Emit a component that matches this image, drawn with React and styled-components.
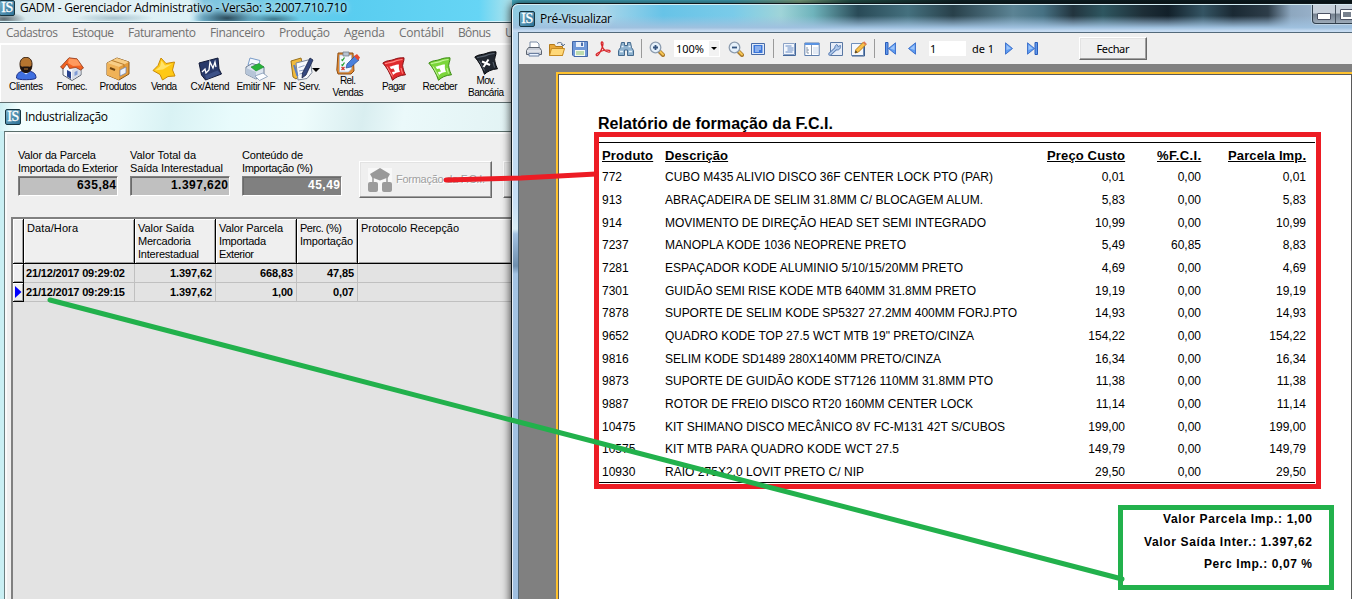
import React, { useLayoutEffect, useRef } from 'react';
import styled, { createGlobalStyle, css } from 'styled-components';

const GlobalStyle = createGlobalStyle`
  * { box-sizing: border-box; }
  body { margin: 0; overflow: hidden; }
`;

const segoe = '"Open Sans", "Noto Sans", sans-serif';
const arial = '"Liberation Sans", Arial, sans-serif';
const tahoma = '"Noto Sans", "Open Sans", sans-serif';

/* ---------- text that keeps the pitch of the original bitmap fonts ---------- */
const Pitch = styled.span`
  display: inline-block;
  white-space: pre;
  flex: none;
`;

function Fit({ w, children }) {
  const ref = useRef(null);
  useLayoutEffect(() => {
    const el = ref.current;
    el.style.letterSpacing = '0px';
    const natural = el.getBoundingClientRect().width;
    const gap = (w - natural) / Math.max(1, el.textContent.length - 1);
    el.style.letterSpacing = `${gap}px`;
    el.style.marginRight = `${-gap}px`;
  }, [w, children]);
  return <Pitch ref={ref}>{children}</Pitch>;
}

/* ---------- desktop ---------- */
const Desktop = styled.main`
  position: relative;
  width: 1352px;
  height: 599px;
  overflow: hidden;
  background: linear-gradient(90deg, #4bb9cf 0, #49b4cc 730px, #8db992 800px, #2a5d55 850px, #10262b 960px, #0d1c22 1352px);
  color: #000;
`;

const MainWindow = styled.section`
  width: 512px;
  height: 599px;
  display: flex;
  flex-direction: column;
  background: #efefef;
  overflow: hidden;
`;

const MainTitle = styled.header`
  height: 23px;
  flex: none;
  display: flex;
  align-items: flex-start;
  gap: 5px;
  margin-left: -1px;
  font: 12px/16px ${segoe};
  border-bottom: 1px solid #3c5560;
  box-shadow: inset 0 -1px #d9f3fa;
  background:
    radial-gradient(ellipse 34px 10px at 228px 18px, #2b4a5a 0, #3c6c8480 60%, transparent),
    radial-gradient(ellipse 22px 7px at 5px 19px, #5d6a70 0, transparent),
    radial-gradient(ellipse 40px 5px at 115px 18px, #a9c4cf 0, transparent),
    radial-gradient(ellipse 26px 6px at 275px 19px, #3e788c 0, transparent),
    linear-gradient(90deg, #cfe4ea 0, #e3f0f3 60px, #dcf2f7 190px, #80c4de 205px, #78cbe4 250px, #59cdf0 350px, #66d5f5 480px, #aee3ec 512px);
  span { text-shadow: 0 0 5px #ffffffc0, 0 0 8px #ffffff90; }
`;

const MenuBar = styled.nav`
  height: 20px;
  flex: none;
  display: flex;
  gap: 14px;
  padding-left: 6px;
  font: 12px/20px ${segoe};
  color: #707070;
  background: #f0f0f0;
`;

const ToolBar = styled.div`
  height: 59px;
  flex: none;
  display: flex;
  align-items: center;
  padding: 2px 0 0 3px;
  border-top: 2px solid #fff;
  background: #efefef;
  box-shadow: inset 1px 0 #fff;
`;

const ToolButton = styled.div`
  position: relative;
  width: 46px;
  flex: none;
  display: flex;
  flex-direction: column;
  align-items: center;
  font: 10px/12px ${arial};
  svg { display: block; }
`;

const DropArrow = styled.i`
  position: absolute;
  left: 33px;
  top: 11px;
  border: 4px solid transparent;
  border-top-color: #000;
  border-bottom: 0;
`;

const ChildTitle = styled.header`
  height: 29px;
  flex: none;
  display: flex;
  align-items: center;
  gap: 4px;
  padding-left: 5px;
  border-top: 1px solid #5f6e70;
  font: 12px/16px ${segoe};
  background: linear-gradient(100deg, #cbeef2 0, #f4ffff 20px, #eafbfc 120px, #d9f2f4 170px, #e8fbfc 230px, #eefcfc 300px, #d9eef0 360px, #ebf9fa 400px, #e2f3f4 512px);
`;

const ChildFrame = styled.div`
  flex: 1;
  display: flex;
  padding-left: 4px;
  background: #c9eff3;
`;

const ChildBody = styled.div`
  flex: 1;
  min-width: 0;
  display: flex;
  flex-direction: column;
  border-left: 1px solid #6b7f80;
  border-top: 1px solid #5a6e6b;
  box-shadow: inset 2px 2px #fafafa;
  background: #efefef;
  font: 11px/13px ${arial};
`;

const Filters = styled.div`
  display: flex;
  height: 85px;
  flex: none;
  padding: 17px 0 0 13px;
`;

const Field = styled.label`
  width: 112px;
  flex: none;
  display: flex;
  flex-direction: column;
`;

const Line = styled.div`
  display: flex;
`;

const Value = styled.output`
  width: 100px;
  height: 20px;
  margin-top: 1px;
  padding-right: 1px;
  font: bold 12px/17px ${arial};
  border: 1px solid;
  border-color: #808080 #fff #fff #808080;
  box-shadow: inset 1px 1px #6a6a6a;
  display: flex;
  justify-content: flex-end;
  color: ${(p) => (p.$dark ? '#fff' : '#000')};
  background: ${(p) => (p.$dark ? '#808080' : '#c0c0c0')};
`;

const raised = css`
  border: 1px solid;
  border-color: #fff #696969 #696969 #fff;
  box-shadow: inset -1px -1px #a0a0a0, inset 1px 1px #e3e3e3;
  background: #efefef;
`;

const FciButton = styled.button`
  ${raised};
  width: 133px;
  height: 37px;
  margin: 12px 0 0 5px;
  padding: 0 0 0 8px;
  flex: none;
  display: flex;
  align-items: center;
  gap: 4px;
  color: #a0a0a0;
  font: 11px/13px ${arial};
  text-shadow: 1px 1px #fff;
`;

const NextButton = styled(FciButton)`
  width: 40px;
  margin-left: 11px;
`;

const Grid = styled.div`
  flex: 1;
  margin-left: 6px;
  border-left: 2px solid #808080;
  border-top: 2px solid #808080;
  background: #e3e3e3;
`;

const GridRow = styled.div`
  display: grid;
  grid-template-columns: 11px 111px 81px 81px 61px 1fr;
  height: ${(p) => (p.$head ? 45 : 19)}px;
`;

const HeadCell = styled.div`
  padding: 3px 0 0 3px;
  background: #efefef;
  border-right: 1px solid #000;
  border-bottom: 1px solid #000;
  box-shadow: inset 1px 1px #fff, inset -1px -1px #a0a0a0;
`;

const Cell = styled.div`
  display: flex;
  justify-content: ${(p) => (p.$left ? 'flex-start' : 'flex-end')};
  padding: 0 3px 0 2px;
  font: bold 11px/18px ${arial};
  border-right: 1px solid #c0c0c0;
  border-bottom: 1px solid #c0c0c0;
`;

const Marker = styled(HeadCell)`
  padding: 3px 0 0 2px;
  svg { display: block; }
`;

/* ---------- preview window ---------- */
const Preview = styled.section`
  position: absolute;
  left: 511px;
  top: 3px;
  width: 850px;
  height: 610px;
  display: flex;
  flex-direction: column;
  padding-left: 6px;
  border: 1px solid #10181c;
  border-radius: 7px 0 0 0;
  background: linear-gradient(180deg, #b9d8ee 0, #c3dcf3 170px, #c9e0f6 200px, #d9edf5 225px, #a3c2e2 230px, #6f8fae 262px, #a4c4e4 270px, #9fbfe0 100%);
  box-shadow: 0 0 9px 1px #000000b0, inset 1px 1px #ffffffc0;
`;

const PreviewTitle = styled.header`
  height: 28px;
  flex: none;
  display: flex;
  align-items: center;
  gap: 5px;
  margin-left: -5px;
  padding-left: 6px;
  border-radius: 6px 0 0 0;
  border-top: 1px solid #d3edf4;
  font: 12px/18px ${segoe};
  background:
    linear-gradient(180deg, transparent 40%, #9fc1df 84%, #c7dcf2 96%),
    linear-gradient(90deg, #8fcae0 0, #a9d6ea 90px, #67c3e7 150px, #7acbe9 220px, #9fd4d8 268px, #6fb4bc 300px, #294a57 345px, #44707e 395px, #28404a 440px, #5b8394 500px, #467183 530px, #22343e 560px, #2e5660 590px, #1d2e37 630px, #12202a 655px, #345463 690px, #1a2933 720px, #2d3d49 755px, #8da7bf 778px, #a9c0da 838px);
  span { text-shadow: 0 0 6px #ffffffc0; }
`;

const Caption = styled.div`
  align-self: flex-start;
  margin: 0 0 0 auto;
  display: flex;
  height: 19px;
  width: 48px;
  border: 1px solid #303f4c;
  border-top: 0;
  border-radius: 0 0 0 4px;
  background: linear-gradient(#c7d0db 45%, #74808e 50%, #9dabb9);
  box-shadow: 0 0 0 1px #d7e4ee90;
`;

const CaptionButton = styled.div`
  width: 28px;
  display: flex;
  align-items: center;
  justify-content: center;
  border-right: 1px solid #45515d;
  &::after {
    content: '';
    width: 12px;
    height: ${(p) => (p.$max ? 9 : 5)}px;
    margin-top: ${(p) => (p.$max ? 0 : 4)}px;
    border: ${(p) => (p.$max ? '1px' : '1px')} solid #4c5264;
    border-radius: 1px;
    background: ${(p) => (p.$max ? '#77808d' : '#fff')};
    box-shadow: ${(p) => (p.$max ? 'inset 0 0 0 2px #fff' : 'none')};
  }
`;

const PreviewBody = styled.div`
  flex: 1;
  display: flex;
  flex-direction: column;
  border-left: 1px solid #53697a;
  border-top: 1px solid #53697a;
  background: #808080;
`;

const PreviewTools = styled.div`
  height: 31px;
  flex: none;
  display: flex;
  align-items: center;
  padding-left: 3px;
  background: #efefef;
  font: 11px/16px ${tahoma};
`;

const Slot = styled.div`
  width: ${(p) => p.$w}px;
  margin-left: ${(p) => p.$ml || 0}px;
  flex: none;
  display: flex;
  justify-content: center;
  svg { display: block; }
`;

const Sep = styled.i`
  width: 1px;
  height: 19px;
  margin-left: ${(p) => p.$ml}px;
  background: #9a9a9a;
`;

const Zoom = styled.div`
  display: flex;
  align-items: center;
  justify-content: space-between;
  width: 46px;
  height: 17px;
  margin-left: 5px;
  padding-left: 2px;
  background: #fff;
`;

const ZoomArrow = styled.i`
  width: 12px;
  height: 17px;
  display: flex;
  align-items: center;
  justify-content: center;
  border: 1px solid #fff;
  background: #f2f2f2;
  &::after {
    content: '';
    border: 3px solid transparent;
    border-top-color: #000;
    border-bottom: 0;
  }
`;

const PageInput = styled.div`
  width: 37px;
  height: 15px;
  margin: 0 6px 0 8px;
  padding-left: 1px;
  line-height: 15px;
  background: #fff;
`;

const CloseButton = styled.button`
  ${raised};
  width: 68px;
  height: 23px;
  margin-left: 37px;
  padding: 0;
  font: 11px/16px ${tahoma};
  color: #000;
`;

const Canvas = styled.div`
  flex: 1;
  display: flex;
  padding: 8px 0 0 37px;
`;

const Paper = styled.article`
  width: 796px;
  flex: none;
  padding: 39px 0 0 39px;
  border: solid #ffc22e;
  border-width: 2px 0 0 2px;
  box-shadow: inset 1px 1px #5a5a5a, inset -1px 0 #5a5a5a;
  background: #fff;
  font: 12px/16px ${arial};
`;

const ReportTitle = styled.h1`
  margin: 0;
  padding: 0 0 0 1px;
  height: 29px;
  font: bold 16px/22px ${arial};
`;

const Report = styled.div`
  width: 718px;
  height: 341px;
  border: solid #000;
  border-width: 1px 0;
`;

const ReportRow = styled.div`
  display: grid;
  grid-template-columns: 63px 350px 110px 76px 105px;
  padding-left: 5px;
  align-items: center;
  height: ${(p) => (p.$head ? 23 : 22.67)}px;
  ${(p) => p.$head && css`
    padding-top: 3px;
    font: bold 13px/16px ${arial};
    & > div > span { text-decoration: underline; }
  `}
`;

const Col = styled.div`
  display: flex;
  justify-content: ${(p) => (p.$num ? 'flex-end' : 'flex-start')};
`;

const Summary = styled.footer`
  width: 715px;
  padding-top: 25px;
  display: flex;
  flex-direction: column;
  align-items: flex-end;
  font: bold 12px/22.5px ${arial};
`;

const Markup = styled.svg`
  position: absolute;
  left: 0;
  top: 0;
  pointer-events: none;
`;

/* ---------- icons ---------- */
const LogoBox = styled.i`
  width: 16px;
  height: 16px;
  flex: none;
  display: flex;
  align-items: center;
  justify-content: center;
  border: 1px solid #16343f;
  border-radius: 2px;
  background: linear-gradient(135deg, #78aec8, #2d7297);
  color: #fff;
  font: 14px/14px "Liberation Serif", serif;
  letter-spacing: -0.5px;
  -webkit-text-stroke: 0.3px #fff;
`;
const Logo = () => <LogoBox>IS</LogoBox>;

const Svg = ({ s = 24, children }) => (
  <svg width={s} height={s} viewBox={`0 0 ${s} ${s}`} fill="none">{children}</svg>
);

const icons = {
  client: (
    <Svg>
      <path d="M2.500 21c0-5 3-7 9.500-7s10 2 10 7c0 2-19.500 2.500-19.500 0z" fill="#3f6fe0" stroke="#1c2f86" />
      <path d="M8 14.500l4 3 4-3" fill="#cfe0ff" />
      <path d="M6 7c0-9 12-9 12 0 0 5-2 8.500-6 8.500S6 12 6 7z" fill="#b5742f" stroke="#3b2413" />
      <path d="M6 8c1 1.500 2 2 3.500 1.500h5C16 10 17 9.500 18 8c0 4-2 8-6 8s-6-4-6-8z" fill="#1d1310" />
      <path d="M10 12h4" stroke="#b5742f" />
    </Svg>
  ),
  house: (
    <Svg>
      <path d="M3 9v9l9 5.500 9-5.500V9l-7-6z" fill="#f6f8fc" stroke="#59606c" />
      <path d="M12 13v10l8.500-5.500V9z" fill="#d5dce8" />
      <path d="M.5 10L9 .8l8 1 6.500 9.200-3 2-4.500-2.500-6.500 1L7 7l-4 5z" fill="#f26322" stroke="#8d3a1d" strokeWidth=".8" />
      <path d="M9 1.500l8 1 4 6-8 .5-5-3z" fill="#ff9a5e" />
      <path d="M7 13l4 2v7l-4-2.500z" fill="#28438f" />
      <path d="M14.500 15l3-1.500v4l-3 1.500z" fill="#7f9bd6" />
    </Svg>
  ),
  box: (
    <Svg>
      <path d="M1 6l10-5 12 4v12l-10 6-12-5z" fill="#e39c3c" stroke="#8a5a1c" />
      <path d="M1 6l12 4v13L1 18z" fill="#f0b257" />
      <path d="M1 6l10-5 12 4-10 5z" fill="#f7cd86" />
      <path d="M6 3.500l12 4v3" stroke="#b67b2c" />
      <path d="M14 13l6-3v6l-6 3z" fill="#eef3fb" stroke="#6a83b0" strokeWidth=".7" />
      <path d="M4 11l5 2" stroke="#70450f" strokeWidth="2" />
    </Svg>
  ),
  star: (
    <Svg>
      <path d="M9 1l5 5.500 8.500-1.500-2 8 2.500 6-7 .5L10.500 23 8 17.500l-7-4 5-5z" fill="#ffc915" stroke="#c98a08" />
      <path d="M9.500 3.500l3.500 5 7-1.500-9 5.500-8 1 5-4z" fill="#ffe36a" />
    </Svg>
  ),
  chart: (
    <Svg>
      <path d="M1 6l19-5 1 11 2.500 5-16 6-4-5z" fill="#28396a" stroke="#121a38" />
      <path d="M7 18.500l12.500-5 3 3-14 6z" fill="#3c5187" />
      <path d="M4 15l3-3 1 4 3-3 1-8 3 6 2-6 1 5" stroke="#fff" strokeWidth="1.300" />
    </Svg>
  ),
  printer: (
    <Svg>
      <path d="M6 1l10 2.500-2 7L4 8z" fill="#f4f9ff" stroke="#7a9cc8" />
      <path d="M2 10l6-3.500 12 3.500v8l-8 4-10-5z" fill="#dbe4ef" stroke="#6b7c95" />
      <path d="M2 11l10 4v7L2 17z" fill="#b6c5d8" />
      <path d="M7 10l8-3.500 5 3.500-8 4z" fill="#27b43a" stroke="#178429" strokeWidth=".6" />
      <path d="M11 19l8-3 4.500 3.500-8 4z" fill="#fbfdff" stroke="#8198b5" strokeWidth=".8" />
    </Svg>
  ),
  notes: (
    <Svg>
      <path d="M1 4l10-3 3 14-8 7-3-2z" fill="#f1bb3d" stroke="#98701d" />
      <path d="M6 6l14-3.500 2 13-5 6-9 1.500z" fill="#f7f9fd" stroke="#7a8597" />
      <path d="M8.500 10.500l6-2M9 14l5-1M9.500 17l4-1" stroke="#8fa2c4" />
      <path d="M20 1l3 2-7 15-4 3 .5-5z" fill="#35497f" stroke="#1b2547" strokeWidth=".8" />
      <path d="M4 8l3.500 11" stroke="#5b7fc5" strokeWidth="2" />
    </Svg>
  ),
  report: (
    <Svg>
      <path d="M2 2h15l1 18-3 3H2L.8 19z" fill="#e18a33" stroke="#8c4e16" />
      <path d="M3.500 4h12v14l-3 3h-9z" fill="#f4f9ff" stroke="#9db4d4" strokeWidth=".7" />
      <path d="M7 1h6v4H7z" fill="#b8c3d0" stroke="#68727f" strokeWidth=".7" />
      <path d="M5.500 8.500l1 1 2-3M5.500 13.500l1 1 2-3" stroke="#2aa136" strokeWidth="1.300" />
      <path d="M5.500 16l3 3m0-3l-3 3" stroke="#d3362b" strokeWidth="1.200" />
      <path d="M11 13l8-8 4 4-8 7-5 1z" fill="#4a80dc" stroke="#274a93" strokeWidth=".7" />
      <path d="M18 5l3-2 3 3.500-2 3z" fill="#e6492f" />
    </Svg>
  ),
};

const Money = ({ main, dark, light, cross }) => (
  <Svg>
    <path d="M.8 6C5 3 8 4 12 2.500 15 1 18 .8 22 .8c.6 3-2.500 7-1 10 .6 3 1.500 5 2.500 7-6 .5-10 2.500-13 5.500C8 16 5 11 .8 6z" fill={main} stroke={dark} />
    <path d="M3 6.800c5-2 8-1 11-3 2-.8 4-1.200 6.500-1.300" stroke={light} strokeWidth="1.200" />
    <path d="M5 9.500l5.500 10M19 11l1.500 5.500" stroke={light} />
    {cross
      ? <path d="M8 10.500l8 3.500M14.500 8.500l-5 7.500" stroke="#fff" strokeWidth="2" />
      : <path d="M7.500 9.500c3 0 5-2 9.500-2-.5 3 0 5 1 7.500-2.500 0-5 1-7 3l-1-3 3-.5-1.500-3-2.500.5z" fill="#fff" />}
  </Svg>
);

const Lens = ({ minus }) => (
  <Svg s={16}>
    <path d="M10 10l4 4" stroke="#a8782a" strokeWidth="4" strokeLinecap="round" />
    <path d="M10.500 10l3.500 3.500" stroke="#f6c655" strokeWidth="2" strokeLinecap="round" />
    <circle cx="6.500" cy="6.500" r="5.300" fill="#e6f1fb" stroke="#8d9db0" strokeWidth="1.300" />
    <path d={minus ? 'M4 6.500h5' : 'M4 6.500h5M6.500 4v5'} stroke="#35557f" strokeWidth="1.800" />
  </Svg>
);

const small = {
  print: (
    <Svg s={16}>
      <path d="M4 7V1h7l2 2v4" fill="#fff" stroke="#7b8ca6" />
      <path d="M2.500 6.500h11l2 3v4H.5v-4z" fill="#c9ced8" stroke="#5c6470" />
      <path d="M1 10h14" stroke="#f5f7fa" />
      <path d="M3 12.500h10v2.500H3z" fill="#eaf3ff" stroke="#6b7fa0" />
    </Svg>
  ),
  open: (
    <Svg s={16}>
      <path d="M.5 3.500h5l1 2h7v9H.5z" fill="#e9a93b" stroke="#b37a1a" />
      <path d="M.5 14.500l2-7h13l-2 7z" fill="#ffd877" stroke="#c58a22" />
      <path d="M8 2.500c3-2.500 6 0 6 2m-2-1.500l2 2 2-2" stroke="#5e7390" />
    </Svg>
  ),
  save: (
    <Svg s={16}>
      <path d="M.5.5h15v15H2l-1.500-1.500z" fill="#6f98d8" stroke="#4267a8" />
      <path d="M4 1h8v5H4z" fill="#e9f0fa" />
      <path d="M9 1.500h2v3.500H9z" fill="#4c70ae" />
      <path d="M3 9h10v6H3z" fill="#f5faf2" />
      <path d="M4 11h8M4 13h8" stroke="#86bb6b" />
    </Svg>
  ),
  pdf: (
    <Svg s={16}>
      <path d="M7 1c-1.500 0-.5 4 1.500 7 2 2.500 6 4 6.500 2.500.5-2-6-1.500-9.500 0C2 12 .5 13.500 1.500 14.500 3 15.500 6 10 7 7s1.500-6 0-6z" stroke="#d9262b" strokeWidth="1.300" />
    </Svg>
  ),
  find: (
    <Svg s={16}>
      <path d="M3.500 1.500h3v3h3v-3h3l1 5 2 3v5h-6V9h-3v5.500H.5v-5l2-3z" fill="#8eb2cf" stroke="#43698d" />
      <path d="M2 10.500h3M11 10.500h3M3.500 5.500h2M10.500 5.500h2" stroke="#e6f2fb" strokeWidth="1.500" />
    </Svg>
  ),
  full: (
    <Svg s={16}>
      <path d="M1.500 2.500h13v11h-13z" fill="#dfe9f8" stroke="#476ba8" />
      <path d="M3.500 4h9v8h-9z" fill="#3a76da" />
      <path d="M5 6h6M5 8h6M5 10h4" stroke="#dbe8ff" />
    </Svg>
  ),
  outline: (
    <Svg s={16}>
      <path d="M2.500 2.500h11v11h-11z" fill="#f3f7fd" stroke="#8da3c6" />
      <path d="M14.500 2v12.500H2" stroke="#44689c" />
      <path d="M4.500 5h6M6.500 7h6M6.500 9h6M4.500 11h7" stroke="#5a7fbd" strokeWidth=".9" />
    </Svg>
  ),
  thumbs: (
    <Svg s={16}>
      <path d="M.8 2h14.400v12.500H.8z" fill="#fff" stroke="#5e7fae" />
      <path d="M1 3h14" stroke="#5a93e2" strokeWidth="2" />
      <path d="M7.500 4v10M3 6v6h2M3 9h2" stroke="#8a98ac" />
      <path d="M9 6h5v7H9z" fill="#e4ebf5" />
    </Svg>
  ),
  setup: (
    <Svg s={16}>
      <path d="M2.500 1.500h12v13h-12z" fill="#e7edf8" stroke="#5877a3" />
      <path d="M2 13l6-5.500" stroke="#5e82b8" strokeWidth="3.500" strokeLinecap="round" />
      <path d="M12.500 4.500l-2.500 1-1-2C6.500 4 6 8 8.500 8.800s4.500-1.500 4-4.300z" fill="#a9c4e8" stroke="#5e82b8" />
      <path d="M2 13l6.500-6" stroke="#b9d0ef" strokeWidth="1.500" strokeLinecap="round" />
    </Svg>
  ),
  edit: (
    <Svg s={16}>
      <path d="M.5 2.500h12v12H.5z" fill="#f5f8fd" stroke="#6f8fba" />
      <path d="M13.500 5v10H1" stroke="#3b5d8e" />
      <path d="M4 12l1-3.500L12.500 1 15 3.500 7.500 11z" fill="#f9c24a" stroke="#b57b1a" />
      <path d="M4 12l.7-2.500 1.800 1.800z" fill="#333" />
      <path d="M12.500 1L15 3.500" stroke="#e07b50" strokeWidth="2" />
    </Svg>
  ),
};

const Arrow = ({ bar, flip }) => (
  <svg width={bar ? 11 : 8} height="13" viewBox={bar ? '0 0 11 13' : '3 0 8 13'}>
    <g transform={flip ? `translate(${bar ? 11 : 14} 0) scale(-1 1)` : undefined}>
      {bar && <path d="M.5.5h2.500v12H.5z" fill="#5f97ea" stroke="#2a5dbb" />}
      <path d="M10.500.8v11.400L3.500 6.500z" fill="#5e9bf0" stroke="#2a61c4" strokeWidth=".8" />
      <path d="M9.500 3v5L5 6.500z" fill="#9cc5fa" />
    </g>
  </svg>
);

const Hierarchy = () => (
  <svg width="24" height="24" viewBox="0 0 24 24">
    <path d="M0 0h24v24H0z" fill="#f8f8f8" />
    <path d="M5 15V9h14v6" fill="none" stroke="#999" strokeWidth="1.500" />
    <path d="M12 0l10 6-2 3.500-8 3-8-3L2 6z" fill="#999" />
    <rect y="14" width="10" height="10" rx="2" fill="#9c9c9c" />
    <rect x="14" y="14" width="10" height="10" rx="2" fill="#9c9c9c" />
  </svg>
);

/* ---------- data ---------- */
const menu = [['Cadastros', 52], ['Estoque', 42], ['Faturamento', 68], ['Financeiro', 55], ['Produção', 51], ['Agenda', 41], ['Contábil', 45], ['Bônus', 33], ['Utilitários', 56]];

const tools = [
  [icons.client, ['Clientes', 34]],
  [icons.house, ['Fornec.', 31]],
  [icons.box, ['Produtos', 37]],
  [icons.star, ['Venda', 26]],
  [icons.chart, ['Cx/Atend', 39]],
  [icons.printer, ['Emitir NF', 39]],
  [icons.notes, ['NF Serv.', 37]],
  [icons.report, ['Rel.', 16], ['Vendas', 31]],
  [<Money main="#e0292c" dark="#8b1014" light="#ff8c86" />, ['Pagar', 24]],
  [<Money main="#7bd63a" dark="#3d8b16" light="#c6f59b" />, ['Receber', 35]],
  [<Money main="#20262f" dark="#06080c" light="#59636f" cross />, ['Mov.', 19], ['Bancária', 36]],
];

const fields = [
  { lines: [['Valor da Parcela', 78], ['Importada do Exterior', 100]], value: '635,84', w: 39 },
  { lines: [['Valor Total da', 66], ['Saída Interestadual', 93]], value: '1.397,620', w: 57 },
  { lines: [['Conteúdo de', 61], ['Importação (%)', 71]], value: '45,49', w: 32, dark: true },
];

const heads = [
  [['Data/Hora', 51]],
  [['Valor Saída', 56], ['Mercadoria', 53], ['Interestadual', 61]],
  [['Valor Parcela', 64], ['Importada', 47], ['Exterior', 35]],
  [['Perc. (%)', 42], ['Importação', 53]],
  [['Protocolo Recepção', 98]],
];

const history = [
  ['21/12/2017 09:29:02', '1.397,62', '668,83', '47,85'],
  ['21/12/2017 09:29:15', '1.397,62', '1,00', '0,07'],
];
const historyWidth = { 8: 42, 6: 33, 5: 27, 4: 21 };

const products = [
  ['772', 'CUBO M435 ALIVIO DISCO 36F CENTER LOCK PTO (PAR)', 328, '0,01', '0,00', '0,01'],
  ['913', 'ABRAÇADEIRA DE SELIM 31.8MM C/ BLOCAGEM ALUM.', 318, '5,83', '0,00', '5,83'],
  ['914', 'MOVIMENTO DE DIREÇÃO HEAD SET SEMI INTEGRADO', 321, '10,99', '0,00', '10,99'],
  ['7237', 'MANOPLA KODE 1036 NEOPRENE PRETO', 241, '5,49', '60,85', '8,83'],
  ['7281', 'ESPAÇADOR KODE ALUMINIO 5/10/15/20MM PRETO', 298, '4,69', '0,00', '4,69'],
  ['7301', 'GUIDÃO SEMI RISE KODE MTB 640MM 31.8MM PRETO', 311, '19,19', '0,00', '19,19'],
  ['7878', 'SUPORTE DE SELIM KODE SP5327 27.2MM 400MM FORJ.PTO', 352, '14,93', '0,00', '14,93'],
  ['9652', 'QUADRO KODE TOP 27.5 WCT MTB 19" PRETO/CINZA', 309, '154,22', '0,00', '154,22'],
  ['9816', 'SELIM KODE SD1489 280X140MM PRETO/CINZA', 276, '16,34', '0,00', '16,34'],
  ['9873', 'SUPORTE DE GUIDÃO KODE ST7126 110MM 31.8MM PTO', 328, '11,38', '0,00', '11,38'],
  ['9887', 'ROTOR DE FREIO DISCO RT20 160MM CENTER LOCK', 308, '11,14', '0,00', '11,14'],
  ['10475', 'KIT SHIMANO DISCO MECÂNICO 8V FC-M131 42T S/CUBOS', 340, '199,00', '0,00', '199,00'],
  ['10575', 'KIT MTB PARA QUADRO KODE WCT 27.5', 234, '149,79', '0,00', '149,79'],
  ['10930', 'RAIO 275X2.0 LOVIT PRETO C/ NIP', 199, '29,50', '0,00', '29,50'],
];

const Lines = ({ items }) => items.map(([t, w]) => <Line key={t}><Fit w={w}>{t}</Fit></Line>);

/* ---------- page ---------- */
export default function App() {
  return (
    <Desktop>
      <GlobalStyle />
      <MainWindow>
        <MainTitle><Logo /><Fit w={327}>GADM - Gerenciador Administrativo - Versão: 3.2007.710.710</Fit></MainTitle>
        <MenuBar>{menu.map(([t, w]) => <Fit key={t} w={w}>{t}</Fit>)}</MenuBar>
        <ToolBar>
          {tools.map(([icon, ...lines]) => (
            <ToolButton key={lines[0][0]}>
              {icon}
              {lines.map(([t, w]) => <Fit key={t} w={w}>{t}</Fit>)}
              {lines[0][0] === 'NF Serv.' && <DropArrow />}
            </ToolButton>
          ))}
        </ToolBar>
        <ChildTitle><Logo /><Fit w={83}>Industrialização</Fit></ChildTitle>
        <ChildFrame>
          <ChildBody>
            <Filters>
              {fields.map((f) => (
                <Field key={f.value}>
                  <Lines items={f.lines} />
                  <Value $dark={f.dark}><Fit w={f.w}>{f.value}</Fit></Value>
                </Field>
              ))}
              <FciButton><Hierarchy /><Fit w={89}>Formação da F.C.I.</Fit></FciButton>
              <NextButton />
            </Filters>
            <Grid>
              <GridRow $head>
                <HeadCell />
                {heads.map((h) => <HeadCell key={h[0][0]}><Lines items={h} /></HeadCell>)}
              </GridRow>
              {history.map(([date, ...nums], i) => (
                <GridRow key={date}>
                  <Marker>
                    {i === 1 && <svg width="7" height="12" viewBox="0 0 7 12"><path d="M0 0l6.500 6L0 12z" fill="#00f" /></svg>}
                  </Marker>
                  <Cell $left><Fit w={99}>{date}</Fit></Cell>
                  {nums.map((n) => <Cell key={n}><Fit w={historyWidth[n.length]}>{n}</Fit></Cell>)}
                  <Cell />
                </GridRow>
              ))}
            </Grid>
          </ChildBody>
        </ChildFrame>
      </MainWindow>

      <Preview>
        <PreviewTitle>
          <Logo /><Fit w={72}>Pré-Visualizar</Fit>
          <Caption><CaptionButton /><CaptionButton $max /></Caption>
        </PreviewTitle>
        <PreviewBody>
          <PreviewTools>
            <Slot $w={24}>{small.print}</Slot>
            <Slot $w={22}>{small.open}</Slot>
            <Slot $w={24}>{small.save}</Slot>
            <Slot $w={22}>{small.pdf}</Slot>
            <Slot $w={24}>{small.find}</Slot>
            <Sep $ml={3} />
            <Slot $w={25} $ml={2}><Lens /></Slot>
            <Zoom><Fit w={28}>100%</Fit><ZoomArrow /></Zoom>
            <Slot $w={24} $ml={4}><Lens minus /></Slot>
            <Slot $w={20}>{small.full}</Slot>
            <Sep $ml={5} />
            <Slot $w={20} $ml={5}>{small.outline}</Slot>
            <Slot $w={20} $ml={3}>{small.thumbs}</Slot>
            <Slot $w={20} $ml={4}>{small.setup}</Slot>
            <Slot $w={20} $ml={3}>{small.edit}</Slot>
            <Sep $ml={5} />
            <Slot $w={20} $ml={5}><Arrow bar /></Slot>
            <Slot $w={18} $ml={3}><Arrow /></Slot>
            <PageInput>1</PageInput>
            <Fit w={22}>de 1</Fit>
            <Slot $w={18} $ml={6}><Arrow flip /></Slot>
            <Slot $w={20} $ml={4}><Arrow bar flip /></Slot>
            <CloseButton><Fit w={33}>Fechar</Fit></CloseButton>
          </PreviewTools>
          <Canvas>
            <Paper>
              <ReportTitle><Fit w={235}>Relatório de formação da F.C.I.</Fit></ReportTitle>
              <Report>
                <ReportRow $head>
                  <Col><Fit w={51}>Produto</Fit></Col>
                  <Col><Fit w={63}>Descrição</Fit></Col>
                  <Col $num><Fit w={78}>Preço Custo</Fit></Col>
                  <Col $num><Fit w={44}>%F.C.I.</Fit></Col>
                  <Col $num><Fit w={78}>Parcela Imp.</Fit></Col>
                </ReportRow>
                {products.map(([id, name, w, cost, fci, part]) => (
                  <ReportRow key={id}>
                    <Col>{id}</Col>
                    <Col><Fit w={w}>{name}</Fit></Col>
                    <Col $num>{cost}</Col>
                    <Col $num>{fci}</Col>
                    <Col $num>{part}</Col>
                  </ReportRow>
                ))}
              </Report>
              <Summary>
                <Fit w={149}>Valor Parcela Imp.: 1,00</Fit>
                <Fit w={168}>Valor Saída Inter.: 1.397,62</Fit>
                <Fit w={108}>Perc Imp.: 0,07 %</Fit>
              </Summary>
            </Paper>
          </Canvas>
        </PreviewBody>
      </Preview>

      <Markup width="1352" height="599" fill="none" strokeWidth="5">
        <g stroke="#ed1c24">
          <rect x="596.500" y="134.500" width="722" height="352" />
          <path d="M446 180l75-2 75-4" strokeLinecap="round" />
        </g>
        <g stroke="#22b14c">
          <rect x="1120.500" y="507.500" width="211" height="80" />
          <path d="M50 300L1122 579" strokeLinecap="round" />
        </g>
      </Markup>
    </Desktop>
  );
}
